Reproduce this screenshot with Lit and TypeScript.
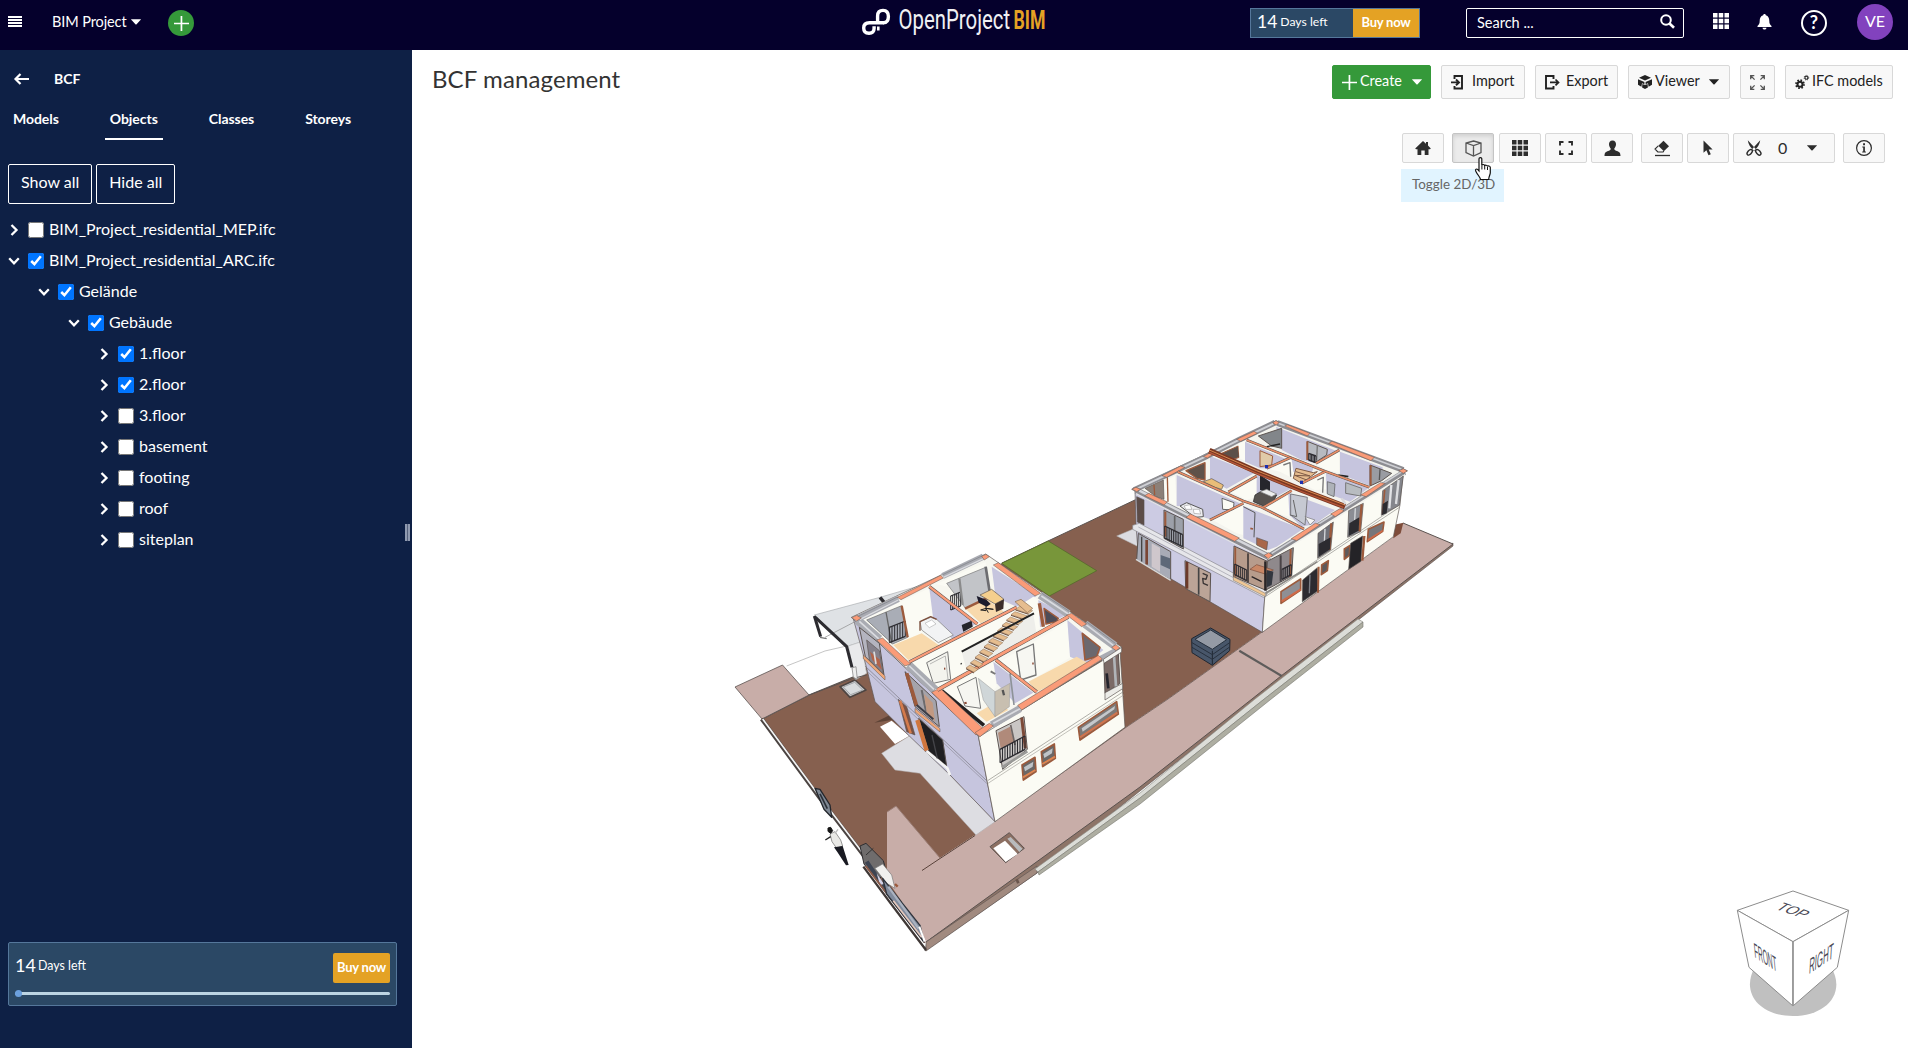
import { LitElement, html, svg, css } from "lit";
import { customElement } from "lit/decorators.js";

// [points, fill, stroke?, strokeWidth?]; an empty fill draws an open line
type Shape = [string, string, string?, number?];

const EDGE = "#5b5350";
const ORANGE = "#fa9b78";
const GREY = "#a9abb2";
const CREAM = "#fbfbf4";
const LAV = "#c6c5de";
const FLOOR = "#f8d9ac";
const FRAME = "#9c5a3c";
const BROWN = "#86604f";
const PINK = "#c8ada8";
const DARK = "#2c2b30";
const GLASS = "#a9adb6";

const draw = (shapes: Shape[]) =>
  shapes.map(([pts, fill, stroke = "none", w = 1]) =>
    fill
      ? svg`<polygon points=${pts} fill=${fill} stroke=${stroke} stroke-width=${w}></polygon>`
      : svg`<polyline points=${pts} fill="none" stroke=${stroke} stroke-width=${w}></polyline>`
  );

const bars = (x1: number, y1: number, x2: number, y2: number, h: number, n: number): Shape[] => {
  const out: Shape[] = [];
  for (let i = 0; i <= n; i++) {
    const x = x1 + ((x2 - x1) * i) / n;
    const y = y1 + ((y2 - y1) * i) / n;
    out.push([`${x},${y} ${x},${y + h}`, "", DARK, 3]);
  }
  out.push([`${x1},${y1} ${x2},${y2}`, "", DARK, 4], [`${x1},${y1 + h} ${x2},${y2 + h}`, "", DARK, 4]);
  return out;
};

const ground: Shape[] = [
  ["762,719 809,695 853,677 1002,563 1048,541 1137,499 1262,632 1168,699 1125,728 975,835 940,858 900,905 887,890", BROWN],
  ["762,719 809,695 853,677", "", EDGE, 1.2],
  ["1002,563 1048,541 1137,499", "", EDGE, 1],
  ["1001.7,563.3 1048.3,541 1096.7,570.7 1049.3,596", "#78963a", "#55692c", 0.8],
  ["735,687 782.5,665 809,695 762,719", PINK, EDGE, 0.8],
  ["925,951 1037,873 1140,791 1252,703 1453,546 1453,543 927,941", "#8d7468", EDGE, 0.6],
  ["887,812 896,806 940,858 975,835 995,821 1125,728 1168,699 1262,632 1393,537 1403,523 1453,544 1281,676 1252,699 1140,787 926,942 918,925 887,880", PINK],
  ["926,942 1140,787 1252,699 1281,676 1453,544 1403,523", "", EDGE, 1],
  ["926,942 926,951 1037,873 1037,866", "#a18a7f", EDGE, 0.6],
  ["975,835 995,821 1125,728 1168,699 1262,632", "", "#7b6862", 1],
  ["887,812 896,806 940,858", "", "#9a7d75", 1],
  ["922,870.5 940,858.5 975,835.5", "", "#5a433b", 1],
  ["1035,869 1140,793 1255,699 1358,619 1363,622 1263,700 1140,798 1038,872", "#dcddd8", "#8b8b84", 0.6],
  ["1038,872 1140,798 1263,700 1363,622 1363,627 1270,700 1140,804 1039,875", "#aeaea2", "#77776e", 0.6],
  ["1239.3,650.7 1281.7,676", "", "#5e5c5b", 2.2],
];

const gardenLeft: Shape[] = [
  ["283,225 480,172 600,137 660,130 560,190 440,300 385,318", "#dfe2e5", "#aaadb0", 2],
  ["385,318 440,300 430,345 440,400 405,420", "#e9eaec", "#b9bbbd", 2],
  ["200,378 315,333 380,318", "", "#a8a8a8", 2],
  ["268,465 400,415 440,405", "", EDGE, 3],
  ["315,292 405,245", "", "#888", 2],
  ["283,228 302,290", "", DARK, 9],
  ["286,232 380,320 396,382", "", DARK, 9],
  ["480,172 495,190", "", DARK, 10],
  ["300,292 320,296", "", "#777", 4],
  ["396,384 400,412 412,418 408,380", "#eee", "#777", 2],
  ["360,440 405,420 438,450 390,472", "#c9cccf", "#4e4542", 5],
  ["370,441 404,427 428,450 392,464", "#d9dcde", "#8c8f92", 2],
  ["463,548 510,525 545,560 515,540", "#5e4336"],
  ["480,560 515,542 568,588 525,612", "#fff"],
  ["485,640 568,588 600,600 690,705 825,845 768,885 600,700 525,690", "#dddde2", "#b5b3b5", 1.5],
  ["125,537 300,775 430,945 445,960", "", "#4b4442", 12],
  ["128,537 303,775 433,945 448,960", "", "#f4f4f4", 5],
  ["285,745 300,748 330,795 335,832 312,808", "#7f8894", "#23262c", 4],
  ["300,762 322,806", "", "#2b3038", 5],
];

const houseLeft: Shape[] = [
  // outer walls
  ["400,237 775,588 825,845 690,705 568,588 465,485 430,345", LAV, EDGE, 2],
  ["775,588 1200,330 1215,562 825,845", CREAM, EDGE, 2],
  ["394,232 797,42 1206,322 778,590", "#f7f7f0", EDGE, 2],
  // west bedroom
  ["430,238 628,145 640,235 605,280 520,315", CREAM],
  ["628,145 770,250 700,300 640,240", LAV],
  ["520,315 605,280 660,318 565,360", FLOOR],
  ["440,240 545,197 563,292 518,312", GLASS, "#666", 2],
  ["498,216 515,310", "", "#666", 4],
  ...bars(508, 262, 556, 243, 46, 6),
  ["545,197 563,292", "", FRAME, 7],
  ["600,245 632,232 650,238 700,285 655,308 605,270", "#f2f3f4", "#777", 2],
  ["600,272 600,245 632,230 650,238", "", "#7c4f3c", 4],
  ["615,250 635,240 648,252 628,263", "#fff", "#999", 1.5],
  ["725,255 755,242 758,260 730,275", "#25252b"],
  // study
  ["650,132 797,66 800,90 680,140", CREAM],
  ["680,130 797,82 812,172 738,207", "#c2c4c8", "#777", 2],
  ...bars(692, 168, 722, 156, 42, 5),
  ["718,115 728,195", "", "#8b8b8b", 7],
  ["797,80 812,175", "", "#6c6c70", 8],
  ["735,205 800,178 852,215 782,250", FLOOR],
  ["735,206 805,172", "", FRAME, 7],
  ["815,80 950,168 890,200 850,182 825,160", LAV],
  ["780,165 815,148 852,178 825,192", "#f5cf8d", EDGE, 2],
  ["825,192 852,178 850,206 828,216", "#3a2d2a"],
  ["770,168 800,180 812,192 800,200 776,188", "#1c1c2c"],
  ["798,195 798,212 782,210 798,205 820,208 798,205 805,218", "", "#222", 3],
  // corridor
  ["575,370 885,205 940,170 1030,225 655,440", CREAM],
  ["955,180 1040,225 960,262", LAV],
  ["725,335 940,222 950,285 740,392", "#eeeeea"],
  ["620,368 683,335 692,418 640,430", "#f4f4ee", "#777", 3],
  ["630,372 676,348 684,418", "", "#999", 2],
  ["958,190 970,260", "", FRAME, 10],
  ["972,205 1015,235 1010,245 978,252", "#4d4c58", FRAME, 4],
  // front rooms
  ["665,455 820,365 830,440 770,510", CREAM],
  ["820,365 940,458 885,490 830,430", LAV],
  ["770,520 830,485 865,510 800,545", FLOOR],
  ["712,440 768,412 782,505 735,498", "#f6f6f1", "#777", 3],
  ["775,415 825,455 825,530 790,480", "#cfd6d8", "#999", 1.5],
  ["825,455 870,430 868,500 825,530", "#c8bfb0", "#999", 1.5],
  ["870,400 882,495", "", "#8e9398", 5],
  ["665,452 792,556", "", "#221f20", 11],
  ["840,365 1042,245 1052,352 925,425", CREAM],
  ["1042,240 1150,330 1100,372 1050,350", LAV],
  ["925,425 1070,350 1112,374 952,455", FLOOR],
  ["890,335 940,312 948,405 902,420", "#f7f7f2", "#777", 4],
  ["1087,280 1140,322 1130,350 1095,360", "#6c686e", FRAME, 5],
  ["722,370 725,372", "", "#333", 5],
  ["672,386 676,386", "", "#8b4a36", 6],
  ["937,370 941,371", "", "#8b4a36", 6],
  ["733,490 740,488", "", "#8b4a36", 6],
  ["848,450 852,466", "", "#555", 7],
  ["812,394 826,402", "", "#777", 6],
  // glazed wall tops
  ["412,236 535,176", "", GREY, 20],
  ["668,108 790,50", "", GREY, 19],
  ["960,165 1045,222", "", GREY, 24],
  ["1095,252 1185,318", "", GREY, 24],
  ["412,240 478,298", "", GREY, 26],
  ["565,375 645,450", "", GREY, 26],
  ["815,555 900,506", "", GREY, 22],
  ["1143,356 1196,328", "", GREY, 18],
  ["420,238 535,180", "", "#dadbe0", 4],
  ["412,230 535,170", "", "#7c7d84", 2],
  ["670,112 790,56", "", "#dadbe0", 4],
  ["668,104 790,46", "", "#7c7d84", 2],
  ["964,168 1045,222", "", "#dadbe0", 5],
  ["966,160 1048,214", "", "#7c7d84", 2],
  ["1098,254 1180,316", "", "#dadbe0", 5],
  ["1100,246 1186,310", "", "#7c7d84", 2],
  ["418,244 478,298", "", "#dadbe0", 5],
  ["568,378 642,448", "", "#dadbe0", 5],
  ["820,550 900,506", "", "#dadbe0", 5],
  // cut brick
  ["532,172 662,106 670,114 543,179", ORANGE, EDGE, 1.5],
  ["785,49 798,43 808,50 793,60", ORANGE, EDGE, 1.5],
  ["820,75 835,68 962,160 945,168", ORANGE, EDGE, 1.5],
  ["1040,225 1055,220 1100,252 1085,260", ORANGE, EDGE, 1.5],
  ["1175,322 1188,314 1200,324 1188,332", ORANGE, EDGE, 1.5],
  ["395,233 410,226 424,234 410,243", ORANGE, EDGE, 1.5],
  ["470,300 488,294 572,372 555,378", ORANGE, EDGE, 1.5],
  ["635,457 660,444 790,566 768,585", ORANGE, EDGE, 1.5],
  ["765,578 808,550 820,558 780,590", ORANGE, EDGE, 1.5],
  ["893,496 1135,346 1147,357 905,510", ORANGE, EDGE, 1.5],
  ["628,140 772,252", "", EDGE, 10],
  ["628,140 772,252", "", ORANGE, 7],
  ["568,366 890,202", "", EDGE, 10],
  ["568,366 890,202", "", ORANGE, 7],
  ["652,450 1045,230", "", EDGE, 12],
  ["652,450 1045,230", "", ORANGE, 9],
  ["828,360 950,456", "", EDGE, 11],
  ["828,360 950,456", "", ORANGE, 8],
  // west facade openings
  ["418,262 478,310 492,405 436,350", "#b4b4bf", EDGE, 3],
  ["440,300 478,332 490,402 448,360", "#85808a", EDGE, 2],
  ["430,345 495,408 495,420 430,356", "#f0a878", EDGE, 1.5],
  ["450,335 478,358 486,390 457,360", "#b1644a"],
  ["462,335 468,372", "", "#ddd", 5],
  ["555,395 648,482 658,560 585,500", "#a5a3aa", EDGE, 3],
  ["560,400 590,498", "", FRAME, 11],
  ["605,450 618,515", "", "#6c6a6c", 6],
  ["612,462 638,488 645,545 620,515", "#c29981"],
  ["590,495 640,538", "", "#3c3c44", 6],
  ["585,505 660,566 660,576 585,516", "#f0a878", EDGE, 1.5],
  ["435,378 800,722", "", "#77757f", 2],
  ["437,390 801,731", "", "#908e9a", 2],
  ["535,478 560,500 585,585 560,575", "#7c5143", EDGE, 2],
  ["540,482 572,580", "", "#d47b4c", 8],
  ["596,535 668,600 680,678 625,632", "#1f1f22", EDGE, 3],
  ["592,540 620,632", "", "#d0763f", 13],
  ["620,634 682,685 690,705", "", "#f3f3f3", 8],
  ["636,585 652,655", "", "#45454a", 4],
  // south facade openings
  ["803,722 1210,455", "", "#8a8882", 2],
  ["804,730 1211,465", "", "#a5a39d", 2],
  ["828,572 912,530 922,628 848,688", "#c9c6c4", EDGE, 3],
  ["834,578 870,560 882,605 842,625", "#b08a7a"],
  ["872,555 885,615", "", "#6e6664", 5],
  ["905,533 916,625", "", "#7c4a38", 9],
  ...bars(840, 628, 915, 588, 40, 10),
  ["846,682 922,634", "", "#9a9a98", 8],
  ["1075,562 1190,485 1195,522 1080,600", "#7d7977", FRAME, 5],
  ["1085,565 1185,498 1183,508 1088,575", "#c5c8cb"],
  ["1080,592 1192,518", "", "#d1744d", 6],
  ["906,675 945,652 948,695 910,720", "#6b6766", FRAME, 5],
  ["912,682 940,665 938,680 915,694", "#bfc3c7"],
  ["909,712 946,690", "", "#e0844f", 6],
  ["964,635 1003,612 1006,655 968,680", "#6b6766", FRAME, 5],
  ["970,642 998,625 996,640 973,654", "#bfc3c7"],
  ["967,672 1005,650", "", "#e0844f", 6],
  // east corner balcony
  ["1152,370 1195,340 1200,430 1155,460", "#7b6a66", EDGE, 3],
  ["1182,345 1188,440", "", "#b0b4b8", 8],
  ["1160,400 1165,445", "", "#24242c", 8],
  ["1150,358 1205,322 1205,336 1152,370", "#f6f6f2", EDGE, 2],
  ["1155,458 1208,430 1208,446 1155,480", "#ecece8", EDGE, 2],
];

const stairs: Shape[] = Array.from({ length: 12 }, (_, i): Shape[] => {
  const x = 738 + i * 13.5;
  const y = 384 - i * 16;
  const w = 36 + i * 1.4;
  return [
    [`${x},${y} ${x + 12},${y - 9} ${x + w},${y + 4} ${x + w - 12},${y + 13}`, "#e6bd8f", "#8a6b50", 1.5],
    [`${x},${y + 2} ${x + w - 12},${y + 15}`, "", "#6f4f3c", 3],
  ];
}).flat();

const stairsTop: Shape[] = [
  ["725,335 942,220", "", "#222", 6],
  ["885,185 903,178 938,205 922,218", "#e6bd8f", "#8a6b50", 2],
];

const street: Shape[] = [
  ["810,320 868,278 913,325 857,368", "#8c6f62", EDGE, 3],
  ["820,325 855,302 893,342 857,366", "#fff"],
  ["862,296 872,291 908,326 898,336", "#b9bbbd"],
  ["890,418 895,430", "", "#6a564d", 8],
  ["420,318 438,310 490,362 500,400 470,420 432,372", "#6f6c6c", "#2e2d30", 3],
  ["438,345 460,325", "", "#333", 3],
  ["440,365 490,440 520,480", "", "#3d4452", 13],
  ["465,385 488,372 515,405 525,445 500,430", "#f1f0ee", "#777", 2],
  ["470,400 480,435 492,432", "#d3d2e6"],
  ["525,432 533,440", "", FRAME, 7],
  ["430,380 512,490 618,630", "", "#3f3836", 7],
  ["437,378 615,608", "", "#8a5a48", 6],
  ["488,415 600,556 612,606 500,462", "#7f8a9c", "#30343c", 4],
  ["505,440 596,566", "", "#aab2c0", 7],
  ["520,482 605,592", "", "#e6c9bd", 5],
  ["598,560 614,605", "", "#fff", 6],
  // pedestrian
  ["330,282 345,275 362,300 368,318 350,325 336,305", "#e9e9e6", "#666", 2],
  ["332,290 316,300", "", "#222", 4],
  ["345,280 354,268", "", "#bbb", 4],
  ["342,322 368,318 386,375 378,376 352,336", "#191a22"],
  ["324,264 332,262 338,272 332,280 324,274", "#161616", "#161616", 3],
];

const houseRight: Shape[] = [
  ["110,408 165,385 200,440 175,440", "#dcdce1", "#aaa", 1.5],
  ["940,375 970,368 962,400 940,415", "#7e4d3b"],
  ["165,270 565,475 555,580 547,697 176,480 168,375", "#cccbe3", EDGE, 2],
  ["565,475 970,215 960,315 940,410 547,697 555,580", CREAM, EDGE, 2],
  ["155,268 588,62 982,212 565,480", "#f4f4ee", EDGE, 2],
  // walls inside
  ["190,270 285,228 290,318 255,300", CREAM],
  ["195,265 250,240 252,298 228,290", "#8c8078", EDGE, 2],
  ["222,255 224,285", "", FRAME, 4],
  ["262,230 264,305", "", FRAME, 4],
  ["290,225 485,312 390,358 372,352 330,320 290,318", LAV],
  ["300,318 320,308 368,328 370,350 345,352", "#ededf0", "#555", 3],
  ["312,318 330,314 336,328 318,328", "#fff", "#888", 1.5],
  ["340,328 358,328 362,342 342,340", "#fff", "#888", 1.5],
  ["390,168 522,220 440,266 390,240", LAV],
  ["318,212 375,188 375,240 350,235", "#5f5149", FRAME, 4],
  ["370,245 395,236 430,255 425,268 405,262", "#e9bd78", EDGE, 2],
  ["495,125 620,178 560,205 540,205 495,185", LAV],
  ["425,160 475,138 478,172 460,178", "#5b5049", FRAME, 3],
  ["475,130 495,122 495,182 478,175", CREAM],
  ["540,152 578,168 575,195 540,200", "#e0caa8", FRAME, 3],
  ["588,80 768,152 705,190 665,180 605,150", LAV],
  ["535,108 605,85 605,145 575,138", "#82868a", EDGE, 3],
  ["560,140 600,132", "", "#222", 4],
  ["682,124 742,148 740,165 705,188 682,178", "#b7bac0", EDGE, 3],
  ["682,124 682,180", "", FRAME, 6],
  ["712,136 710,180", "", "#777", 4],
  ...bars(686, 160, 708, 168, 20, 5),
  ["708,192 776,155 778,218 740,210", CREAM],
  ["780,155 908,202 905,240 865,256 780,222", LAV],
  ["870,195 935,220 905,242 870,258", "#9a9ca2", EDGE, 3],
  ["872,196 872,256", "", FRAME, 6],
  ["900,208 898,240", "", "#555", 4],
  ["775,225 805,230", "", "#222", 5],
  ["448,272 530,228 530,290 500,300", CREAM],
  ["530,222 635,265 550,312 530,290", LAV],
  ["540,225 570,245 570,275 540,270", "#26262c"],
  ["525,285 550,270 590,285 580,305 550,318 520,305", "#57524f", "#222", 2],
  ["540,275 560,268 590,282 575,290", "#eee", "#777", 2],
  ["426,295 462,308 460,330 428,328", CREAM, "#666", 3],
  ["570,208 632,178 650,190 660,245 600,215", CREAM],
  ["635,178 700,205 690,232 640,215", LAV],
  ["610,195 630,188 632,230", "", "#777", 4],
  ["648,205 700,218 712,215 665,250 640,235", "#e6bd8f", "#7d5a45", 3],
  ["648,215 690,228 644,226 680,240", "", "#7d5a45", 3],
  ["668,252 732,220 740,268 705,270", CREAM],
  ["738,220 865,265 810,305 740,280", LAV],
  ["712,240 730,232 728,278", "", "#777", 4],
  ["742,245 765,252 762,290 742,282", "#aeb2b8", "#555", 2],
  ["797,248 845,265 842,288 797,280", "#b8bcc0", "#777", 3],
  ["555,325 625,285 628,350 590,340", CREAM],
  ["625,278 765,330 705,372 665,380 628,345", LAV],
  ["632,282 682,292 675,375 632,345", "#c6c9d2", "#7a7a80", 3],
  ["640,300 650,350 630,345", "", "#666", 3],
  ["675,350 705,360 690,375", "#f5f5f5", "#777", 2],
  ["398,360 490,315 490,405 470,400", CREAM],
  ["490,318 668,388 590,440 565,450 490,415", LAV],
  ["490,320 525,338 522,412", "", "#555", 3],
  ["511,385 519,387", "", FRAME, 5],
  ["530,413 563,425 560,450 530,435", "#a9674a", EDGE, 2],
  // glazed wall tops
  ["162,270 370,174 480,118 585,68", "", "#8d8d92", 17],
  ["172,266 370,173 480,118 580,71", "", "#cfd0d5", 6],
  ["592,69 970,210", "", "#8d8d92", 17],
  ["595,70 964,207", "", "#cfd0d5", 5],
  ["168,271 565,470", "", "#8d8d92", 19],
  ["178,272 560,464", "", "#d6d7dc", 7],
  ["168,281 560,480", "", "#e2e2e6", 4],
  ["570,467 974,216", "", "#8d8d92", 17],
  ["575,460 966,215", "", "#cfd0d5", 5],
  ["572,476 976,224", "", "#f4f4ef", 5],
  // cut brick
  ["246,227 302,198 315,202 260,232", ORANGE, EDGE, 1.5],
  ["370,170 390,158 402,162 382,174", ORANGE, EDGE, 1.5],
  ["470,118 522,94 532,100 482,124", ORANGE, EDGE, 1.5],
  ["578,68 588,62 598,68 588,75", ORANGE, EDGE, 1.5],
  ["614,78 622,74 690,100 682,108", ORANGE, EDGE, 1.5],
  ["746,130 756,124 883,172 873,182", ORANGE, EDGE, 1.5],
  ["956,212 970,206 982,213 970,220", ORANGE, EDGE, 1.5],
  ["156,267 168,262 182,268 170,275", ORANGE, EDGE, 1.5],
  ["194,287 206,280 262,306 252,315", ORANGE, EDGE, 1.5],
  ["318,352 332,342 478,414 464,424", ORANGE, EDGE, 1.5],
  ["552,466 566,458 578,466 565,476", ORANGE, EDGE, 1.5],
  ["634,416 706,370 720,374 650,422", ORANGE, EDGE, 1.5],
  ["752,342 780,326 792,332 766,350", ORANGE, EDGE, 1.5],
  ["842,285 902,248 916,250 858,290", ORANGE, EDGE, 1.5],
  ...[
    "293,215 490,303 545,322 672,387",
    "390,360 490,310",
    "500,120 735,214 868,262",
    "445,276 530,228",
    "550,322 635,272",
    "560,205 634,172",
    "665,250 735,215",
    "708,190 778,150",
  ].flatMap((p): Shape[] => [
    [p, "", EDGE, 8],
    [p, "", "#e98e68", 5],
  ]),
  ["388,152 530,215 660,268 795,320", "", "#7a3722", 17],
  ["388,150 530,212 660,264 795,315", "", "#d9894f", 3],
  ["388,157 530,220 660,273 790,322", "", "#b5573a", 4],
  ["555,200 564,200", "", "#1c2fb0", 10],
  ["660,247 669,247", "", "#1c2fb0", 10],
  ["785,295 797,312", "", "#d9d9dc", 7],
  // west facade
  ["170,290 192,300 192,376 172,366", "#5c4c48", EDGE, 2],
  ["158,376 178,370 560,572 560,586 550,592 158,388", "#e6e6ea", "#86858d", 2],
  ["175,381 556,584", "", "#9c9ba6", 2],
  ["252,330 310,358 310,447 252,415", "#9ca0a9", EDGE, 3],
  ["256,335 256,410", "", FRAME, 6],
  ["284,348 284,395", "", "#666", 5],
  ...bars(254, 378, 308, 404, 36, 8),
  ["175,400 272,455 272,540 170,480", "#a8abb6", EDGE, 3],
  ["200,420 200,494", "", "#7a4534", 8],
  ["215,430 240,443 240,515 215,500", "#cfc7cc"],
  ["185,410 185,485", "", "#444", 4],
  ["242,465 270,475 270,508 242,495", "#5d6878"],
  ["168,478 272,541", "", "#d8d8d8", 4],
  ["315,482 392,520 390,605 317,566", "#bba497", EDGE, 3],
  ["321,486 321,566", "", "#6c3a2a", 8],
  ["356,504 356,584", "", "#444", 5],
  ["368,520 382,526 378,538 368,535 370,550 384,556", "", "#3a3434", 4],
  // corner bay
  ["462,438 562,484 556,570 460,530", "#b79c8c", EDGE, 3],
  ["562,484 640,443 635,528 558,570", "#8f898c", EDGE, 3],
  ["466,442 466,530", "", FRAME, 5],
  ["504,460 504,548", "", "#554a46", 6],
  ["510,508 530,494 580,510 555,522", "#c98766", "#7a4b3a", 2],
  ["515,530 545,545", "", "#2a2526", 4],
  ["556,484 556,572", "", "#2a2526", 7],
  ["560,510 580,515 575,555 560,562", "#33373f"],
  ["602,466 602,545", "", "#494346", 6],
  ["632,448 630,530", "", FRAME, 6],
  ...bars(464, 492, 500, 510, 32, 6),
  ...bars(606, 508, 634, 494, 30, 5),
  ["460,530 556,580 556,590 460,541", "#efc795", "#6d6a68", 1.5],
  ["556,580 636,532 665,515 712,485", "", "#8d8b87", 5],
  ["556,590 958,322", "", "#8d8b87", 2],
  ["558,583 958,314", "", "#8d8b87", 2],
  // south facade
  ["714,400 760,366 752,450 713,475", "#707178", EDGE, 2],
  ["754,370 748,450", "", FRAME, 7],
  ["735,386 733,430", "", "#d5d7da", 4],
  ["716,432 752,412 750,448 716,470", DARK],
  ["806,332 850,310 842,395 803,412", "#8b8d94", EDGE, 2],
  ["845,313 838,394", "", FRAME, 7],
  ["826,325 824,360", "", "#d5d7da", 4],
  ["808,370 838,352 836,392 806,408", DARK],
  ["908,272 970,228 958,316 904,346", "#85868c", EDGE, 2],
  ["934,255 928,325", "", "#e2e3e6", 7],
  ["956,240 948,312", "", "#dcdde0", 7],
  ["914,270 908,342", "", FRAME, 5],
  ["908,312 924,302 920,340 906,345", DARK],
  ["603,575 662,537 662,570 603,610", "#8f8f94", FRAME, 5],
  ["605,604 662,568", "", "#d06a48", 6],
  ["668,540 712,503 714,572 667,605", DARK, EDGE, 2],
  ["690,524 688,580", "", "#7d7f86", 4],
  ["716,500 714,578", "", FRAME, 6],
  ["725,495 745,482 742,512 724,524", "#5d5a5c", FRAME, 5],
  ["793,447 810,436 808,466 793,478", "#5d5a5c", FRAME, 5],
  ["812,430 848,408 843,484 806,508", "#242327", EDGE, 2],
  ["853,408 847,482", "", FRAME, 7],
  ["865,388 912,366 908,394 862,425", "#77767a", FRAME, 5],
  ["864,420 908,392", "", "#d06a48", 5],
  // planter
  ["335,716 392,684 450,718 449,752 397,796 336,758", "#48566a", "#1f2631", 3],
  ["345,718 392,690 440,719 397,748", "#949aa5", "#26303d", 3],
  ["397,752 397,794", "", "#1f2631", 3],
  ["336,728 397,764 449,728", "", "#27303d", 3],
  ["336,742 397,778 449,741", "", "#27303d", 3],
];

const icon = (cls: string, vb: string, body: unknown) =>
  html`<svg class="ic ${cls}" viewBox=${vb} aria-hidden="true">${body}</svg>`;

const nine = [0, 1, 2].flatMap((r) =>
  [0, 1, 2].map((c) => svg`<rect x=${c * 5.6} y=${r * 5.6} width="4.400" height="4.400"></rect>`)
);

const I = {
  menu: icon("w14", "0 0 14 11", svg`<path d="M0 0h14v2H0zM0 3h14v2H0zM0 6h14v2H0zM0 9h14v2H0z"/>`),
  caret: icon("caret", "0 0 10 6", svg`<path d="M0 .3h10Q9.600 1 9 1.500L5.600 5.300Q5 5.900 4.400 5.300L1 1.500Q.400 1 0 .3z"/>`),
  plus: icon("w15", "0 0 15 15", svg`<path d="M6.600 0h1.700v6.700H15v1.600H8.300V15H6.600V8.300H0V6.700h6.600z"/>`),
  back: icon("w15", "0 0 15 12", svg`<path d="M6.500 1 1.500 6l5 5M1.500 6H15" fill="none" stroke="currentColor" stroke-width="2.200"/>`),
  right: icon("chev", "0 0 12 12", svg`<path d="M3.500 1l5 5-5 5" fill="none" stroke="currentColor" stroke-width="2.300"/>`),
  down: icon("chev", "0 0 12 12", svg`<path d="M1.200 3.300 6 8.300l4.800-5" fill="none" stroke="currentColor" stroke-width="2.300"/>`),
  search: icon("w15", "0 0 15 15", svg`<circle cx="6" cy="6" r="4.800" fill="none" stroke="currentColor" stroke-width="2"/><path d="M9.500 9.500 14 13.800" stroke="currentColor" stroke-width="2.600"/>`),
  grid: icon("w16", "0 0 15.600 15.600", nine),
  bell: icon("w15", "0 0 15 16", svg`<path d="M7.500 0c.9 0 1.300.6 1.300 1.300C11.500 2 12.300 4.500 12.300 7c0 2.500.8 3.700 2.200 5v.9H.5V12c1.400-1.300 2.200-2.500 2.200-5 0-2.500.8-5 3.500-5.700C6.200.6 6.600 0 7.500 0zM5.500 13.700h4c0 1-.9 1.900-2 1.900s-2-.9-2-1.900z"/>`),
  imp: icon("w14", "0 0 14 15", svg`<path d="M3.500 4V1H11v12.500H3.500V11" fill="none" stroke="currentColor" stroke-width="1.900"/><path d="M0 7.400h7.500M5 4.500l3 2.900-3 2.900" fill="none" stroke="currentColor" stroke-width="1.900"/>`),
  exp: icon("w14", "0 0 14 15", svg`<path d="M8.500 4V1H1v12.500h7.500V11" fill="none" stroke="currentColor" stroke-width="1.900"/><path d="M5 7.400h8M10.500 4.500l3 2.900-3 2.900" fill="none" stroke="currentColor" stroke-width="1.700"/>`),
  cubes: icon("w14", "0 0 14 14", svg`<path d="M7 0 13 2.700 7 5.400 1 2.700zM0 4.200l6.400 2.900v2.200L4 8.200 3.400 11.800 0 9.800zM14 4.200 7.600 7.100v2.200L10 8.200l.6 3.600L14 9.800zM7 9.900l2.600-1 .3 3.500L7 14l-2.900-1.600.3-3.500z"/>`),
  full: icon("w15", "0 0 15 15", svg`<g fill="none" stroke="currentColor" stroke-width="1.300"><path d="M.700 4.300V.700h3.600M1 1l3.600 3.600M10.700.700h3.600v3.600M14 1l-3.600 3.600M.700 10.700v3.600h3.600M1 14l3.600-3.600M14.300 10.700v3.600h-3.600M14 14l-3.600-3.600"/></g>`),
  gears: icon("w14", "0 0 14 14", svg`<g fill="none" stroke="currentColor"><circle cx="5" cy="9.200" r="2.500" stroke-width="2"/><circle cx="5" cy="9.200" r="4" stroke-width="1.800" stroke-dasharray="1.600 1.540"/><circle cx="11.400" cy="2.700" r="1.500" stroke-width="1.100"/><circle cx="11.400" cy="2.700" r="2.300" stroke-width=".9" stroke-dasharray=".9 .9"/></g>`),
  home: icon("w16", "0 0 16 16", svg`<path d="M8 1l3 2.800V2h2v3.600L15.800 8.500l-.8.700H13.500V15h-3.800v-4.500H6.300V15H2.500V9.200H1L.2 8.500z"/>`),
  box: icon("w17", "0 0 17 17", svg`<path d="M8.500 1 16 3v9.500L8.500 16 1 12.500V3zM1 3l7.500 2.500L16 3M8.500 5.500V16" fill="none" stroke="currentColor" stroke-width="1.300"/>`),
  corners: icon("w14", "0 0 14 14", svg`<path d="M1 4.500V1h3.500M9.500 1H13v3.500M1 9.500V13h3.500M9.500 13H13V9.500" fill="none" stroke="currentColor" stroke-width="1.900"/>`),
  person: icon("w17", "0 0 17 17", svg`<path d="M8.500.5c2.400 0 3.700 1.700 3.500 4-.1 1.700-.9 3.200-1.700 4 0 1.500.5 1.900 2.500 2.600 2.500.8 3.600 1.500 3.700 4.900H.5c.1-3.400 1.200-4.100 3.700-4.900 2-.7 2.500-1.100 2.500-2.600-.8-.8-1.600-2.300-1.700-4C4.800 2.200 6.100.5 8.500.5z"/>`),
  eraser: icon("w16", "0 0 16 17", svg`<path d="M9.500.7 15 6.300 9.800 11.300 4.300 5.800z"/><path d="M4.300 5.800 1 9l2.800 3h5.300l.8-.8" fill="none" stroke="currentColor" stroke-width="1.100"/><path d="M1 15.500h15" stroke="currentColor" stroke-width="1.300"/>`),
  arrow: icon("w14", "0 0 14 16", svg`<path d="M2.500.5v12.300l2.900-2.600 2.100 5.100 2.300-1-2.100-4.900h3.900z"/>`),
  cut: icon("w16", "0 0 16 16", svg`<path d="M1.800.3 10 9.300 8.400 11Q2.500 6.500 1.800.3zM14.200.3 6 9.300 7.600 11Q13.500 6.500 14.200.3z"/><g fill="none" stroke="currentColor" stroke-width="1.400"><ellipse cx="3.700" cy="12.300" rx="3.300" ry="1.900" transform="rotate(-48 3.700 12.300)"/><ellipse cx="12.300" cy="12.300" rx="3.300" ry="1.900" transform="rotate(48 12.300 12.300)"/></g>`),
  info: icon("w16", "0 0 16 16", svg`<circle cx="8" cy="8" r="7.400" fill="none" stroke="currentColor" stroke-width="1.200"/><path d="M7.100 3.300h1.900v1.900H7.100zM6.300 6.500h2.600v5h1v1H6.200v-1h1v-4h-.9z"/>`),
  pointer: icon("hand", "0 0 18 24", svg`<path d="M5 1.800c0-1.600 2.800-1.600 2.800 0v6.700c.2-1.500 2.800-1.300 2.900.4.300-1.100 2.700-.9 2.800.6.400-.9 2.700-.7 2.800 1v5.200c0 2.300-1.600 3.600-1.600 6.800H6.500c-.3-2.500-2.700-4.200-4.700-8.300-1-2 .9-2.800 2-1.600L5 14z" fill="#fff" stroke="#111" stroke-width="1.200"/><path d="M7.900 8.500v4M10.700 9v3.500M13.500 10v3" stroke="#111" stroke-width="1"/>`),
};

type Node = { label: string; level: number; open: boolean; on: boolean };
const TREE: Node[] = [
  { label: "BIM_Project_residential_MEP.ifc", level: 0, open: false, on: false },
  { label: "BIM_Project_residential_ARC.ifc", level: 0, open: true, on: true },
  { label: "Gelände", level: 1, open: true, on: true },
  { label: "Gebäude", level: 2, open: true, on: true },
  { label: "1.floor", level: 3, open: false, on: true },
  { label: "2.floor", level: 3, open: false, on: true },
  { label: "3.floor", level: 3, open: false, on: false },
  { label: "basement", level: 3, open: false, on: false },
  { label: "footing", level: 3, open: false, on: false },
  { label: "roof", level: 3, open: false, on: false },
  { label: "siteplan", level: 3, open: false, on: false },
];

const base = css`
  * { box-sizing: border-box; }
  .ic { display: block; flex: none; fill: currentColor; overflow: visible; }
  .w14 { width: 14px; } .w15 { width: 15px; } .w16 { width: 16px; } .w17 { width: 17px; }
  .caret { width: 10px; height: 6px; }
  .chev { width: 12px; height: 12px; }
  .hand { width: 18px; height: 24px; }
`;

@customElement("top-bar")
class TopBar extends LitElement {
  static styles = [base, css`
    :host { display: flex; height: 50px; background: #05002c; color: #fff; font-size: 14px; }
    .left { display: flex; width: 861px; flex: none; align-items: flex-start; }
    .right { display: flex; flex: 1; align-items: flex-start; justify-content: flex-end; padding-right: 15px; }
    .menu { padding: 16px 0 0 8px; }
    .project { display: flex; align-items: center; gap: 4px; width: 116px; padding: 0 0 0 30px; height: 43px; }
    .project span { font-size: 14.500px; letter-spacing: -0.100px; white-space: nowrap; }
    .add { width: 26px; height: 26px; margin: 10px 0 0 30px; border-radius: 50%; background: #35993a; display: grid; place-items: center; }
    .logo { width: 186px; height: 50px; flex: none; overflow: visible; }
    .trial { display: flex; width: 170px; height: 30px; margin: 8px 46px 0 0; border: 1px solid #55779b; background: #2b4865; line-height: 28px; }
    .trial .txt { display: flex; gap: 3px; width: 102px; padding-left: 6px; line-height: 26px; white-space: nowrap; font-size: 12.200px; }
    .trial .num { font-size: 17.500px; line-height: 25px; }
    .trial .buy { flex: 1; background: #e4a224; text-align: center; font-weight: 700; font-size: 13px; letter-spacing: -0.200px; line-height: 27px; }
    .search { display: flex; justify-content: space-between; width: 218px; height: 30px; margin: 8px 29px 0 0; padding: 5px 8px 0 10px; border: 1px solid #fff; border-radius: 2px; line-height: 17px; font-size: 14.500px; }
    .search .ic { height: 15px; }
    .grid { margin: 13px 28px 0 0; }
    .bell { margin: 14px 29px 0 0; }
    .help { width: 26px; height: 26px; margin: 10px 30px 0 0; border: 2px solid #fff; border-radius: 50%; text-align: center; font: 700 18px/21px Lato, sans-serif; }
    .avatar { width: 36px; height: 36px; margin-top: 4px; border-radius: 50%; background: #8242be; text-align: center; font-size: 16px; line-height: 34px; }
    .word { font: 400 27.500px Roboto, sans-serif; fill: #f0f0f4; }
    .bim { font: 700 26px Roboto, sans-serif; fill: #e4a224; }
  `];
  render() {
    return html`
      <div class="left">
        <div class="menu">${I.menu}</div>
        <div class="project"><span>BIM Project</span>${I.caret}</div>
        <div class="add">${I.plus}</div>
      </div>
      <svg class="logo" viewBox="861 0 186 50">
        <g fill="none" stroke="#fff" stroke-width="3.400">
          <path d="M884 22.800h-14.500q-5.800 0-5.800 5.200t5.200 5.300 5.200-5v-2"/>
          <path d="M877.600 23v-7q0-5.600 5.400-5.600t5.400 6.200-5 6.200"/>
        </g>
        <path d="M877 26.500h2.600v4H877z" fill="#fff"/>
        <text class="word" transform="translate(898.500 28.700) scale(.770 1)" textLength="145" lengthAdjust="spacingAndGlyphs">OpenProject</text>
        <text class="bim" transform="translate(1013.500 28.700) scale(.680 1)" textLength="47" lengthAdjust="spacingAndGlyphs">BIM</text>
      </svg>
      <div class="right">
        <div class="trial"><div class="txt"><span class="num">14</span><span>Days left</span></div><div class="buy">Buy now</div></div>
        <div class="search"><span>Search ...</span>${I.search}</div>
        <div class="grid">${I.grid}</div>
        <div class="bell">${I.bell}</div>
        <div class="help">?</div>
        <div class="avatar">VE</div>
      </div>`;
  }
}

@customElement("side-bar")
class SideBar extends LitElement {
  static styles = [base, css`
    :host { display: flex; flex-direction: column; width: 412px; flex: none; background: #0e2045; color: #fff; position: relative; }
    .head { display: flex; align-items: center; gap: 25px; height: 58px; padding-left: 14px; font-weight: 700; font-size: 14px; }
    .head span { padding-bottom: 1px; }
    .tabs { display: flex; gap: 41px; height: 32px; padding-left: 8px; font-weight: 700; font-size: 14px; line-height: 22px; }
    .tab { padding: 0 5px; letter-spacing: -0.050px; }
    .tab.on { border-bottom: 2px solid #fff; }
    .btns { display: flex; gap: 4px; padding: 24px 0 0 8px; }
    .btn { height: 40px; padding: 0 12px; border: 1px solid #fff; border-radius: 2px; font-size: 16px; line-height: 34px; }
    .tree { flex: 1; padding-top: 10px; }
    .row { display: flex; align-items: center; height: 31px; padding-left: 8px; font-size: 16px; }
    .row input { width: 16px; height: 16px; margin: 0 5px 0 8px; }
    .row span { padding-bottom: 2px; }
    .trial { width: 389px; height: 64px; margin: 0 0 42px 8px; padding: 10px 6px 0 6px; border: 1px solid #55779b; border-radius: 2px; background: #2b4865; }
    .line { display: flex; justify-content: space-between; height: 30px; font-size: 13px; }
    .days { display: flex; gap: 2px; font-size: 12.400px; line-height: 26px; }
    .num { font-size: 18px; line-height: 25px; }
    .buy { width: 57px; height: 30px; border-radius: 2px; background: #e4a224; text-align: center; font-weight: 700; line-height: 29px; letter-spacing: -0.200px; }
    .bar { display: flex; align-items: center; height: 3px; margin-top: 9px; border-radius: 2px; background: #bcd4e3; }
    .dot { width: 7px; height: 7px; border-radius: 50%; background: #6b9fdd; }
    .grip { position: absolute; left: 405px; top: 474px; width: 5px; height: 17px; border: solid #8f9ab0; border-width: 0 2px; background: #55617c; }
  `];
  render() {
    return html`
      <div class="head">${I.back}<span>BCF</span></div>
      <div class="tabs">
        ${["Models", "Objects", "Classes", "Storeys"].map((t) => html`<div class="tab ${t === "Objects" ? "on" : ""}">${t}</div>`)}
      </div>
      <div class="btns"><div class="btn">Show all</div><div class="btn">Hide all</div></div>
      <div class="tree">
        ${TREE.map((n) => html`<div class="row" style="margin-left:${n.level * 30}px">
          ${n.open ? I.down : I.right}<input type="checkbox" .checked=${n.on} aria-label=${n.label} /><span>${n.label}</span>
        </div>`)}
      </div>
      <div class="trial">
        <div class="line"><div class="days"><span class="num">14</span><span>Days left</span></div><div class="buy">Buy now</div></div>
        <div class="bar"><div class="dot"></div></div>
      </div>
      <div class="grip"></div>`;
  }
}

@customElement("model-canvas")
class ModelCanvas extends LitElement {
  static styles = css`
    :host { display: block; }
    .scene { display: block; width: 1496px; height: 885px; }
    .face { font-family: "Liberation Sans", Arial, sans-serif; fill: #4a4a56; }
  `;
  render() {
    return html`<svg class="scene" viewBox="412 163 1496 885">
      <g stroke-linejoin="round">
        ${draw(ground)}
        <g transform="translate(720 540) scale(.33333)">${draw(gardenLeft)}${draw(houseLeft)}${draw(stairs)}${draw(stairsTop)}</g>
        <g transform="translate(1080 400) scale(.33333)">${draw(houseRight)}</g>
        <g transform="translate(720 740) scale(.33333)">${draw(street)}</g>
      </g>
      <g transform="translate(1700 870) scale(.33333)">
        <path d="M165 290C120 370 180 438 279 438S440 370 393 290z" fill="#c0c0c0"/>
        <g fill="#fff" stroke="#8c8c8c" stroke-width="3" stroke-linejoin="round">
          <path d="M279 63 446 121 279 215 112 121z"/>
          <path d="M112 121 279 215V408L147 292z"/>
          <path d="M446 121 279 215V408L412 292z"/>
        </g>
        <path d="M279 215V408" stroke="#999" stroke-width="5"/>
        <text class="face" transform="matrix(1 .34 -.85 .6 228 116)" font-size="46" x="-2" y="2" textLength="84" lengthAdjust="spacingAndGlyphs">TOP</text>
        <text class="face" transform="matrix(.68 .44 .1 1 164 262)" font-size="64" textLength="100" lengthAdjust="spacingAndGlyphs">FRONT</text>
        <text class="face" transform="matrix(.68 -.46 -.06 1 326 313)" font-size="66" textLength="108" lengthAdjust="spacingAndGlyphs">RIGHT</text>
      </g>
    </svg>`;
  }
}

@customElement("app-root")
class AppRoot extends LitElement {
  static styles = [base, css`
    :host { display: flex; flex-direction: column; width: 1908px; height: 1048px; overflow: hidden; background: #fff; font-family: Lato, "Open Sans", sans-serif; color: #222; }
    .body { display: flex; flex: 1; min-height: 0; }
    .main { display: flex; flex-direction: column; flex: 1; min-width: 0; }
    .head { display: flex; justify-content: space-between; height: 49px; padding: 15px 15px 0 20px; }
    .title { margin: 0; font-size: 24px; font-weight: 400; line-height: 28px; color: #333; letter-spacing: .1px; }
    .actions { display: flex; gap: 10px; }
    .btn { display: flex; align-items: center; height: 34px; border: 1px solid #d8d8d8; border-radius: 2px; background: #f8f8f8; font-size: 14.400px; white-space: nowrap; }
    .btn span { padding-bottom: 3px; }
    .create { width: 99px; padding-left: 9px; gap: 3px; border-color: #35993a; background: #35993a; color: #fff; }
    .create .caret { margin-left: 7px; }
    .viewer .caret { margin-left: 6px; }
    .import { width: 84px; padding-left: 9px; gap: 7px; }
    .export { width: 83px; padding-left: 9px; gap: 7px; }
    .viewer { width: 102px; padding-left: 9px; gap: 3px; }
    .fs { width: 35px; justify-content: center; color: #555; }
    .ifc { width: 108px; padding-left: 9px; gap: 3px; }
    .tools { display: flex; justify-content: flex-end; height: 64px; padding: 34px 23px 0 0; }
    .tool { position: relative; display: flex; align-items: center; justify-content: center; width: 42px; height: 30px; margin-left: 4px; border: 1px solid #d8d8d8; border-radius: 2px; background: #f8f8f8; color: #2d2d2d; }
    .gap { margin-left: 8px; }
    .on { background: #ebebeb; border-color: #c4c4c4; color: #555; box-shadow: inset 0 2px 4px rgba(0, 0, 0, .12); }
    .g5 { margin-left: 5px; }
    .wide { width: 102px; justify-content: flex-start; padding-left: 12px; font-size: 16px; }
    .wide span { margin-left: 16px; padding-bottom: 1px; }
    .wide .caret { margin-left: 20px; }
    .tip { position: absolute; right: -11px; top: 35px; width: 103px; height: 33px; padding-left: 11px; background: #e1f4ff; color: #666; font-size: 13.400px; line-height: 30px; white-space: nowrap; }
    .hand { position: absolute; left: 21px; top: 23px; z-index: 1; }
  `];
  render() {
    return html`
      <top-bar></top-bar>
      <div class="body">
        <side-bar></side-bar>
        <div class="main">
          <div class="head">
            <h1 class="title">BCF management</h1>
            <div class="actions">
              <div class="btn create">${I.plus}<span>Create</span>${I.caret}</div>
              <div class="btn import">${I.imp}<span>Import</span></div>
              <div class="btn export">${I.exp}<span>Export</span></div>
              <div class="btn viewer">${I.cubes}<span>Viewer</span>${I.caret}</div>
              <div class="btn fs">${I.full}</div>
              <div class="btn ifc">${I.gears}<span>IFC models</span></div>
            </div>
          </div>
          <div class="tools">
            <div class="tool">${I.home}</div>
            <div class="tool gap on">${I.box}<div class="tip">Toggle 2D/3D</div>${I.pointer}</div>
            <div class="tool g5">${I.grid}</div>
            <div class="tool">${I.corners}</div>
            <div class="tool">${I.person}</div>
            <div class="tool gap">${I.eraser}</div>
            <div class="tool">${I.arrow}</div>
            <div class="tool wide">${I.cut}<span>0</span>${I.caret}</div>
            <div class="tool gap">${I.info}</div>
          </div>
          <model-canvas></model-canvas>
        </div>
      </div>`;
  }
}
